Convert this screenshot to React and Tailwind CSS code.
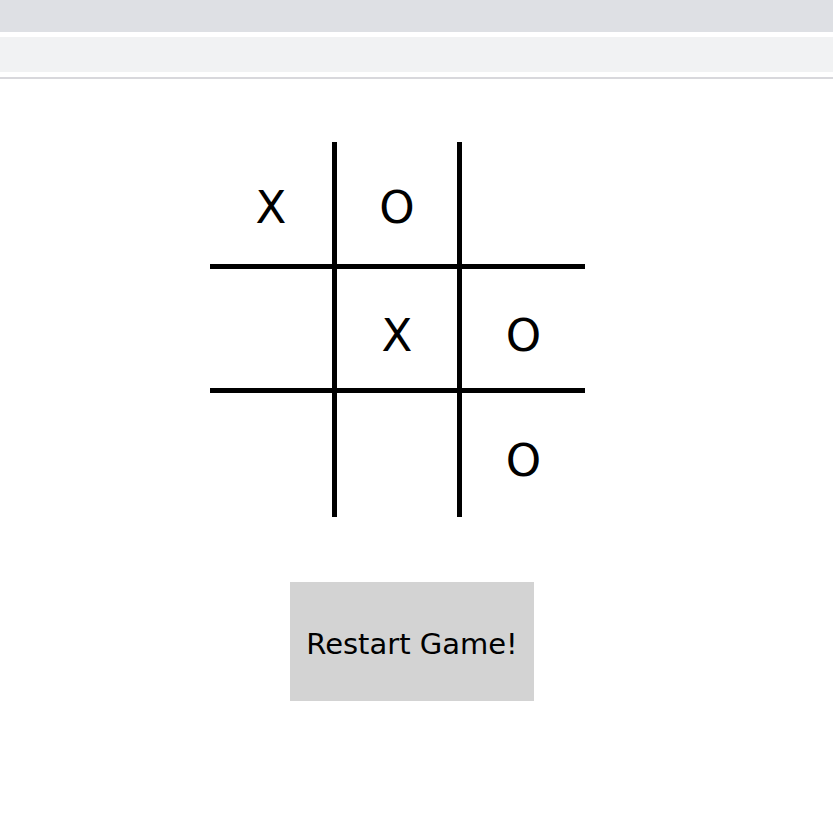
import React from "react";

const board = [
  ["X", "O", ""],
  ["", "X", "O"],
  ["", "", "O"],
];

const cellClasses = [
  ["border-r-[5px] border-b-[5px]", "border-r-[5px] border-b-[5px]", "border-b-[5px]"],
  ["border-r-[5px] border-b-[5px]", "border-r-[5px] border-b-[5px]", "border-b-[5px]"],
  ["border-r-[5px]", "border-r-[5px]", ""],
];

const rowPad = ["pt-[8px]", "pt-[13px]", "pt-[10px]"];

export default function App() {
  return (
    <div className="w-[833px] min-h-[823px] bg-white" style={{ fontFamily: '"DejaVu Sans", sans-serif' }}>
      <div className="h-[32px] bg-[#dee0e4]" />
      <div className="h-[5px] bg-white" />
      <div className="h-[35px] bg-[#f1f2f3]" />
      <div className="h-[5px] bg-white" />
      <div className="h-[2px] bg-[#d8d8dc]" />

      <div className="flex flex-col items-start pt-[63px]">
        <div className="ml-[210px] grid grid-cols-[127px_125px_123px] grid-rows-[127px_124px_124px]">
          {board.map((row, r) =>
            row.map((v, c) => (
              <div
                key={`${r}-${c}`}
                className={`flex items-center justify-center border-black border-solid ${cellClasses[r][c]} ${rowPad[r]}`}
              >
                <span className="text-[45px] leading-none text-black">{v}</span>
              </div>
            ))
          )}
        </div>

        <button className="ml-[290px] mt-[65px] flex h-[119px] w-[244px] items-center justify-center bg-[#d3d3d3] pt-[5px] text-[29px] leading-none text-black">
          Restart Game!
        </button>
      </div>
    </div>
  );
}
